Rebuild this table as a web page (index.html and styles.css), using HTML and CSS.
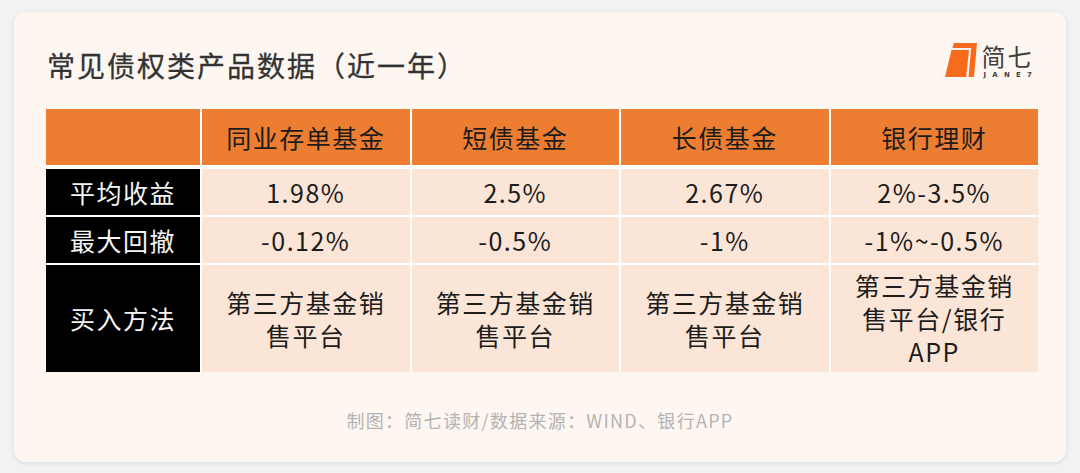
FILE: index.html
```html
<!DOCTYPE html>
<html lang="zh-CN">
<head>
<meta charset="utf-8">
<title>常见债权类产品数据</title>
<link rel="stylesheet" href="styles.css">
</head>
<body>
<div class="card">
  <div class="head">
    <h1 class="title">常见债权类产品数据（近一年）</h1>
    <div class="logo">
      <svg class="mark" width="34" height="38" viewBox="0 0 34 38">
        <path d="M11 1 L34 1 L31 35 L25.5 35 L28.2 6 L9.4 6 Z" fill="#f76b1c"/>
        <path d="M8.5 8 L26 8 L23.2 35 L2 35 Z" fill="#f76b1c"/>
      </svg>
      <div class="brand">
        <div class="brand-cn">简七</div>
        <div class="brand-en">JANE7</div>
      </div>
    </div>
  </div>
  <div class="grid">
    <div class="cell hd"></div>
    <div class="cell hd">同业存单基金</div>
    <div class="cell hd">短债基金</div>
    <div class="cell hd">长债基金</div>
    <div class="cell hd">银行理财</div>

    <div class="cell lab">平均收益</div>
    <div class="cell val">1.98%</div>
    <div class="cell val">2.5%</div>
    <div class="cell val">2.67%</div>
    <div class="cell val">2%-3.5%</div>

    <div class="cell lab">最大回撤</div>
    <div class="cell val">-0.12%</div>
    <div class="cell val">-0.5%</div>
    <div class="cell val">-1%</div>
    <div class="cell val">-1%~-0.5%</div>

    <div class="cell lab">买入方法</div>
    <div class="cell val">第三方基金销售平台</div>
    <div class="cell val">第三方基金销售平台</div>
    <div class="cell val">第三方基金销售平台</div>
    <div class="cell val">第三方基金销售平台/银行APP</div>
  </div>
  <p class="source">制图：简七读财/数据来源：WIND、银行APP</p>
</div>
</body>
</html>
```
FILE: styles.css
```css
html, body {
  margin: 0;
  padding: 0;
}
body {
  background: #f2f2f2;
  font-family: "Noto Sans CJK SC", "Noto Sans", sans-serif;
  width: 1080px;
  height: 473px;
  overflow: hidden;
}
.card {
  margin: 12px 0 0 14px;
  width: 1052px;
  height: 450px;
  box-sizing: border-box;
  background: #fef7f1;
  border-radius: 12px;
  box-shadow: 0 1px 5px rgba(0, 0, 0, 0.09);
  padding: 0 28px 0 32px;
}
.head {
  height: 97px;
  box-sizing: border-box;
  padding-top: 8px;
  display: flex;
  justify-content: space-between;
  align-items: center;
}
.title {
  margin: 0;
  padding-left: 1px;
  font-size: 28px;
  font-weight: 400;
  letter-spacing: 2px;
  line-height: 36px;
  color: #333333;
  -webkit-text-stroke: 0.3px #333333;
}
.logo {
  display: flex;
  align-items: center;
  gap: 4px;
  margin-bottom: 7px;
}
.mark {
  display: block;
}
.brand {
  display: flex;
  flex-direction: column;
  align-items: flex-start;
}
.brand-cn {
  font-size: 24px;
  line-height: 26px;
  letter-spacing: 2px;
  color: #3e3e3e;
  font-weight: 400;
}
.brand-en {
  font-family: "DejaVu Sans", sans-serif;
  font-size: 7px;
  font-weight: 700;
  line-height: 8px;
  margin-top: 2px;
  letter-spacing: 6.2px;
  color: #3e3e3e;
  padding-left: 2px;
}
.grid {
  width: 992px;
  display: grid;
  grid-template-columns: 154px repeat(4, 1fr);
  grid-template-rows: 58px 46px 46px 107px;
  gap: 2px;
  background: #ffffff;
}
.cell {
  display: flex;
  align-items: center;
  justify-content: center;
  text-align: center;
  font-size: 25px;
  letter-spacing: 1.5px;
  line-height: 33px;
  color: #1c1c1c;
  padding: 0 20px;
  box-sizing: border-box;
}
.hd {
  background: #ed7d31;
  margin-bottom: 2px;
}
.lab {
  background: #000000;
  color: #f4f4f4;
  padding: 0 8px;
}
.val {
  background: #fbe5d6;
}
.source {
  margin: 36px 0 0;
  text-align: center;
  font-size: 18px;
  letter-spacing: 1.3px;
  line-height: 24px;
  color: #b3b3b3;
  padding-right: 4px;
}
```
